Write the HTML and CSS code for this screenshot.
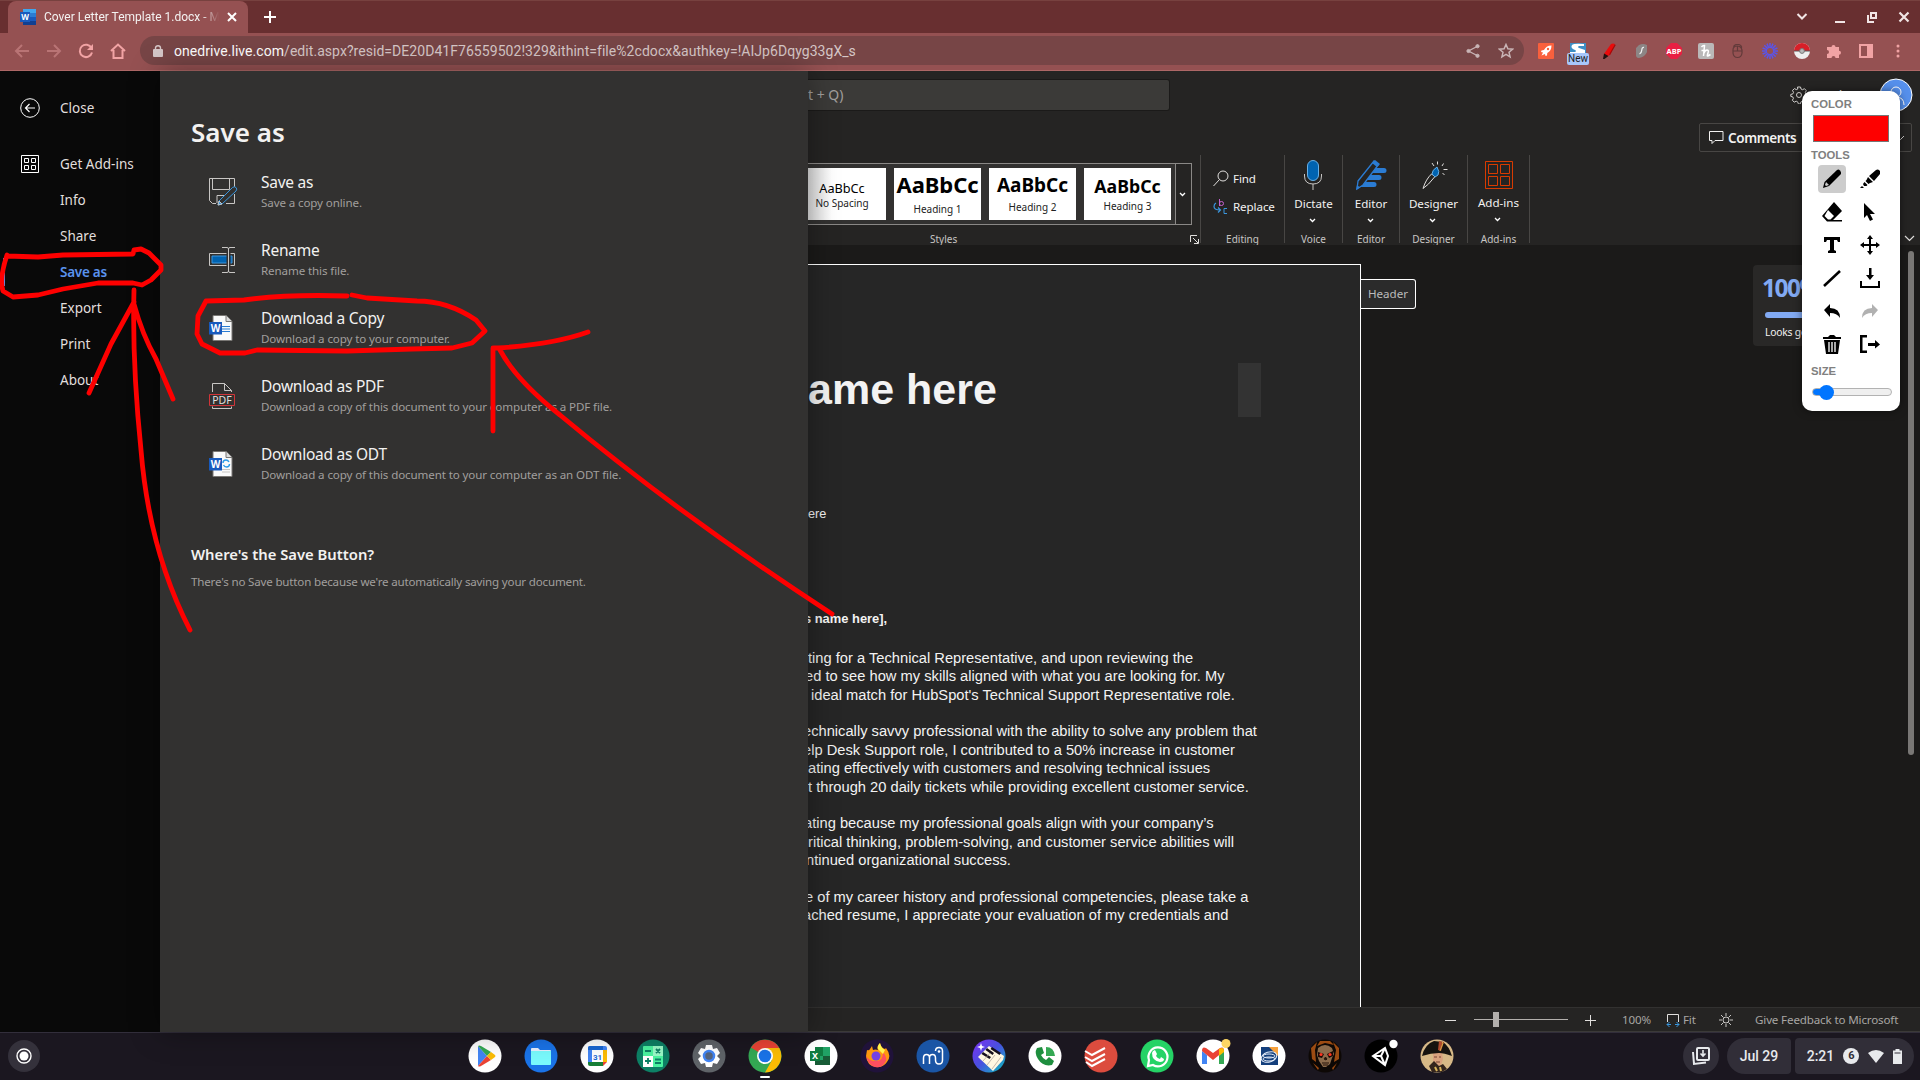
FILE: index.html
```html
<!DOCTYPE html>
<html lang="en">
<head>
    <meta charset="UTF-8">
    <title>Cover Letter Template 1.docx - Microsoft Word Online</title>
    <link rel="stylesheet" href="styles.css">
</head>
<body>
    <!-- Browser tabs -->
    <header class="tabstrip">
        <div class="tab">
            <svg width="16" height="16" viewBox="0 0 16 16"><path fill="#41a5ee" d="M3 0h13v4H3z"/><path fill="#2b7cd3" d="M3 4h13v4H3z"/><path fill="#185abd" d="M3 8h13v4H3z"/><path fill="#103f91" d="M3 12h13v4H3z"/><path fill="#185abd" d="M0 3h10v10H0z"/><text x="5" y="11" class="w-letter" font-size="8">W</text></svg>
            <span class="tab-title">Cover Letter Template 1.docx - Mi</span>
            <svg width="10" height="10" viewBox="0 0 10 10"><path d="M1 1l8 8M9 1l-8 8" stroke="#fff" stroke-width="2"/></svg>
        </div>
        <svg class="new-tab" width="12" height="12" viewBox="0 0 12 12"><path d="M6 0v12M0 6h12" stroke="#fff" stroke-width="2"/></svg>
        <div class="window-buttons">
            <svg width="12" height="12" viewBox="0 0 12 12"><path d="M1.500 3L6 7.500 10.500 3" fill="none" stroke="#f1e5e5" stroke-width="2"/></svg>
            <svg class="minimize" width="12" height="12" viewBox="0 0 12 12"><path d="M1 11h10" stroke="#f1e5e5" stroke-width="2"/></svg>
            <svg width="12" height="12" viewBox="0 0 12 12"><path d="M5 2h5v5H5zM2 4v7h6" fill="none" stroke="#f1e5e5" stroke-width="2"/></svg>
            <svg width="12" height="12" viewBox="0 0 12 12"><path d="M1.500 1.500l9 9M10.500 1.500l-9 9" stroke="#f1e5e5" stroke-width="2.200"/></svg>
        </div>
    </header>

    <!-- Address bar -->
    <div class="toolbar">
        <div class="nav-buttons">
            <svg width="16" height="16" viewBox="0 0 16 16" fill="none" stroke="#b97475" stroke-width="2"><path d="M15 8H2M8 2L2 8l6 6"/></svg>
            <svg width="16" height="16" viewBox="0 0 16 16" fill="none" stroke="#b97475" stroke-width="2"><path d="M1 8h13M8 2l6 6-6 6"/></svg>
            <svg width="16" height="16" viewBox="0 0 16 16" fill="none" stroke="#f1a3a4" stroke-width="2"><path d="M13.500 5A6.200 6.200 0 1 0 14 9.500"/><path d="M15 1v6H9z" fill="#f1a3a4" stroke="none"/></svg>
            <svg width="16" height="16" viewBox="0 0 16 16" fill="none" stroke="#f1a3a4" stroke-width="2"><path d="M1 8l7-6.500L15 8M3.500 7v8h9V7"/></svg>
        </div>
        <div class="omnibox">
            <svg width="10" height="12" viewBox="0 0 10 12"><path d="M1 4h8q1 0 1 1v6q0 1-1 1H1q-1 0-1-1V5q0-1 1-1z" fill="#d5c7c8"/><path d="M2.500 5V3a2.500 2.300 0 0 1 5 0v2" fill="none" stroke="#d5c7c8" stroke-width="1.400"/></svg>
            <span class="url"><b>onedrive.live.com</b>/edit.aspx?resid=DE20D41F76559502!329&amp;ithint=file%2cdocx&amp;authkey=!AIJp6Dqyg33gX_s</span>
            <svg width="14" height="14" viewBox="0 0 14 14" fill="#c9b5b6" stroke="#c9b5b6"><path d="M12 2L2.500 7l9.500 5" fill="none" stroke-width="1.300"/><circle cx="11.500" cy="2.200" r="1.600"/><circle cx="2.500" cy="7" r="1.600"/><circle cx="11.500" cy="11.800" r="1.600"/></svg>
            <svg width="16" height="16" viewBox="0 0 16 16"><path d="M8 1.500l1.900 4.300 4.700.4-3.600 3.100 1.100 4.600L8 11.400l-4.100 2.500L5 9.300 1.400 6.200l4.700-.4z" fill="none" stroke="#c9b5b6" stroke-width="1.500"/></svg>
        </div>
        <div class="extensions">
            <svg width="16" height="16" viewBox="0 0 16 16"><rect width="16" height="16" rx="1" fill="#f9603d"/><path d="M13.500 2.500c-4 0-6 2-7.500 4.500L3.500 7.500 3 9l2 .5L3.500 12.500l3.500-1.500.5 2L9 12.500l.3-2.500c2.500-1.500 4.200-3.500 4.200-7.500z" fill="#fff"/><circle cx="10" cy="6" r="1.200" fill="#f9603d"/></svg>
            <div class="ext-new">
                <svg width="16" height="10" viewBox="0 0 16 10"><path d="M0 0h16v10H0z" fill="#3d8fc5"/><path d="M2 2q2-2 12-1v2H9Q7 4 9 5l6 2v3H0V9h5Q7 8 5 7 0 5 2 2z" fill="#fff"/></svg>
                <span>New</span>
            </div>
            <svg width="16" height="16" viewBox="0 0 16 16"><path d="M9 1q2-1 4 0L8 12l-4 2-2-3z" fill="#e90c0c"/><path d="M13 1l.5 1.500L8 12l-1-.5z" fill="#a50808"/><path d="M2 10.500L6.500 13 2.500 16H1z" fill="#22110f"/></svg>
            <svg width="16" height="16" viewBox="0 0 16 16"><path d="M5 2q4-2 8 0v7q-2 5-8 6-3.500 0-3-4V5z" fill="#8c8585"/><path d="M10 4.500Q8 4 7.800 7T5.500 11" fill="none" stroke="#eee" stroke-width="1.300"/></svg>
            <svg width="16" height="16" viewBox="0 0 16 16"><path d="M5 0h6l5 5v6l-5 5H5l-5-5V5z" fill="#e81f43"/><text x="8" y="10.800" class="w-letter" font-size="7.500">ABP</text></svg>
            <svg width="16" height="16" viewBox="0 0 16 16"><rect width="16" height="16" rx="2" fill="#bab8b8"/><path d="M3.500 4Q5 2 6.500 2.500L5.500 13M5.500 11Q7 7 9 7t1 3-.5 3 3-1.500M3.500 7.500h4" fill="none" stroke="#fff" stroke-width="1.500"/></svg>
            <svg width="16" height="16" viewBox="0 0 16 16"><path d="M3 7q0-4 4-4t5 4v3q-.5 4.500-4.500 4.500T3 10zM3 8h9M7.500 3v5M4 5Q3 2.500 6 1.500h3q3 1 2.500 3.500" fill="none" stroke="#623a3a" stroke-width="1.200"/></svg>
            <svg width="16" height="16" viewBox="0 0 16 16"><g stroke="#5b54e6" stroke-width="1.500"><path d="M8 0v5M8 11v5M0 8h5M11 8h5M2.300 2.300l3.500 3.500M10.200 10.200l3.500 3.500M13.700 2.300l-3.500 3.500M5.800 10.200l-3.500 3.500M5 .6l1.900 4.600M9.100 10.800l1.900 4.600M11 .6L9.100 5.200M6.900 10.800L5 15.400M.6 5l4.600 1.900M10.800 9.100l4.600 1.900M15.400 5l-4.600 1.900M5.200 9.100L.6 11"/></g></svg>
            <svg width="16" height="16" viewBox="0 0 16 16"><circle cx="8" cy="8" r="8" fill="#eee"/><path d="M0 8a8 8 0 0 1 16 0z" fill="#d81f28"/><path d="M0 8h16" stroke="#555" stroke-width="1"/><circle cx="8" cy="8" r="2.400" fill="#b8b8b8" stroke="#777"/></svg>
            <svg width="16" height="16" viewBox="0 0 16 16"><path d="M2 4h3.500a2 2 0 1 1 4 0H13v3.700a2 2 0 1 1 0 4V15H9.500a2 2 0 1 0-4 0H1v-4a2 2 0 1 0 0-4V4z" fill="#f1a3a4"/></svg>
            <svg width="16" height="16" viewBox="0 0 16 16"><path d="M2 2h12v12H2z" fill="none" stroke="#f1a3a4" stroke-width="2"/><path d="M9 3h4v10H9z" fill="#f1a3a4"/></svg>
            <svg width="16" height="16" viewBox="0 0 16 16" fill="#f1a3a4"><circle cx="8" cy="3" r="1.500"/><circle cx="8" cy="8" r="1.500"/><circle cx="8" cy="13" r="1.500"/></svg>
        </div>
    </div>

    <main class="app">
        <!-- File menu -->
        <nav class="file-nav">
            <a class="nav-close"><svg width="20" height="20" viewBox="0 0 20 20" fill="none" stroke="#fff"><circle cx="10" cy="10" r="9.300"/><path d="M15 10H5.500M9.500 6l-4 4 4 4" stroke-width="1.200"/></svg>Close</a>
            <a><svg width="20" height="20" viewBox="0 0 20 20" fill="none" stroke="#fff"><path d="M1.500 1.500h17v17h-17zM4.500 4.500h4v4h-4zM11.500 4.500h4v4h-4zM4.500 11.500h4v4h-4zM11.500 11.500h4v4h-4z"/></svg>Get Add-ins</a>
            <a>Info</a>
            <a>Share</a>
            <a class="active">Save as</a>
            <a>Export</a>
            <a>Print</a>
            <a>About</a>
        </nav>

        <section class="save-panel">
            <h1>Save as</h1>
            <div class="option">
                <svg width="30" height="30" viewBox="0 0 30 30" fill="none" stroke="#c8c6c4"><path d="M26.500 10V1.500h-25v22l3 3H8M4.500 2v10.500h17V2M9 26v-7.500h7M26.500 17v9.500H18"/><path d="M24.500 10.500q2-1.500 3.500 0t0 3.500L14 27l-4 1 1-4z" stroke="#3a96dd" fill="#323130"/><path d="M11 24l3 3-4 1z" fill="#3a96dd"/></svg>
                <div><h2>Save as</h2><p>Save a copy online.</p></div>
            </div>
            <div class="option">
                <svg width="30" height="30" viewBox="0 0 30 30" fill="none"><path d="M1.500 8.500h25v12h-25z" stroke="#c8c6c4"/><path d="M4 11h20v7H4z" fill="#0063b1" stroke="#3a96dd"/><path d="M20.500 2v25" stroke="#323130" stroke-width="4"/><path d="M14 2.500h5q1.500 0 1.500 1.500 0-1.500 1.500-1.500h5M14 27.500h5q1.500 0 1.500-1.500 0 1.500 1.500 1.500h5M20.500 4v22" stroke="#c8c6c4"/></svg>
                <div><h2>Rename</h2><p>Rename this file.</p></div>
            </div>
            <div class="option">
                <svg width="30" height="30" viewBox="0 0 30 30"><path d="M5 2.500h13l6 6V27.500H5z" fill="#fafafa" stroke="#797774"/><path d="M18 2.500v6h6" fill="#ddd" stroke="#797774"/><path d="M14 13.500h8M14 16h8M14 18.500h8" stroke="#2b7cd3"/><path d="M1 9h13v12.500H1z" fill="#185abd"/><text x="7.500" y="19" class="w-letter" font-size="10">W</text></svg>
                <div><h2>Download a Copy</h2><p>Download a copy to your computer.</p></div>
            </div>
            <div class="option">
                <svg width="30" height="30" viewBox="0 0 30 30" fill="none" stroke="#c8c6c4"><path d="M4.500 11V2.500h12l7 7v1.500M16.500 2.500v7h7M4.500 25.500v2h19v-2"/><path d="M1.500 13.500h25v11h-25z" stroke="#d13438"/><text x="14" y="22.500" class="pdf-letter">PDF</text></svg>
                <div><h2>Download as PDF</h2><p>Download a copy of this document to your computer as a PDF file.</p></div>
            </div>
            <div class="option">
                <svg width="30" height="30" viewBox="0 0 30 30"><path d="M5 2.500h13l6 6V27.500H5z" fill="#fafafa" stroke="#797774"/><path d="M18 2.500v6h6" fill="#ddd" stroke="#797774"/><path d="M15 14q0-3 3-3 2 0 3 2M21.500 15q0 3-3 3-2 0-3-2" fill="none" stroke="#2b9be8" stroke-width="1.400"/><path d="M14 20.500h8M14 23h8" stroke="#c8c6c4"/><path d="M1 9h13v12.500H1z" fill="#185abd"/><text x="7.500" y="19" class="w-letter" font-size="10">W</text></svg>
                <div><h2>Download as ODT</h2><p>Download a copy of this document to your computer as an ODT file.</p></div>
            </div>
            <h3>Where's the Save Button?</h3>
            <p class="note">There's no Save button because we're automatically saving your document.</p>
        </section>

        <!-- Word editor -->
        <section class="editor">
            <div class="title-bar">
                <div class="search">t + Q)</div>
                <svg class="gear" width="18" height="18" viewBox="0 0 18 18" fill="none" stroke="#d2d0ce"><circle cx="9" cy="9" r="2.500"/><path d="M7.500 1h3l.5 2 1.500.7 2-1 1.800 2-1 1.800.6 1.500 2 .5v2l-2 .5-.7 1.500 1 2-2 1.800-1.800-1-1.500.6-.5 2h-2l-.7-2-1.500-.7-2 1-1.800-2 1-1.800-.6-1.500-2-.5v-2l2-.5.7-1.500-1-2 2-1.800 1.800 1 1.500-.6z"/></svg>
                <span class="account">Share</span>
                <svg class="avatar" width="34" height="34" viewBox="0 0 34 34" fill="none"><circle cx="17" cy="17" r="16" fill="#5690ec" stroke="#fff"/><circle cx="17" cy="14" r="5" stroke="#fff"/><path d="M9 27q0-8 8-8t8 8" stroke="#fff"/></svg>
            </div>
            <div class="action-row">
                <div class="comments"><svg width="15" height="15" viewBox="0 0 15 15" fill="none" stroke="#f3f2f1"><path d="M.5 1.500h13.500v9H6l-3 3v-3H.5z"/></svg>Comments<svg class="comments-chevron" width="9" height="6" viewBox="0 0 9 6"><path d="M1 1l3.500 3.500L8 1" fill="none" stroke="#d2d0ce"/></svg></div>
            </div>
            <div class="ribbon">
                <div class="group styles-group">
                    <div class="gallery">
                        <div class="style-card no-spacing"><b>AaBbCc</b><span>No Spacing</span></div>
                        <div class="style-card heading1"><b>AaBbCc</b><span>Heading 1</span></div>
                        <div class="style-card heading2"><b>AaBbCc</b><span>Heading 2</span></div>
                        <div class="style-card heading3"><b>AaBbCc</b><span>Heading 3</span></div>
                        <div class="gallery-more"><svg width="7" height="5" viewBox="0 0 7 5"><path d="M1 1l2.500 2.500L6 1" fill="none" stroke="#fff" stroke-width="1.300"/></svg></div>
                    </div>
                    <div class="group-label">Styles</div>
                    <svg class="launcher" width="9" height="9" viewBox="0 0 9 9" fill="none" stroke="#e1dfdd"><path d="M.5 7V.5H7M3 3l5 5M8.500 4v4.500H4"/></svg>
                </div>
                <div class="group editing">
                    <div class="command"><svg width="16" height="17" viewBox="0 0 16 17" fill="none" stroke="#e1dfdd"><circle cx="10" cy="6" r="5"/><path d="M6.500 9.500L.5 16"/></svg>Find</div>
                    <div class="command"><svg width="16" height="17" viewBox="0 0 16 17" fill="none"><path d="M6.500 1v7M6.500 5q0-1.500 2-1.500t2 2-2 2-2-1.500" stroke="#c561cf"/><path d="M3 5Q1 6 1 8.500 1 12 7 12M5 9.500L7.500 12 5 14.500" stroke="#3a96dd" stroke-width="1.200"/><path d="M14 10.500h-3v5h3" stroke="#3a96dd"/></svg>Replace</div>
                    <div class="group-label">Editing</div>
                </div>
                <div class="group dictate">
                    <svg width="32" height="32" viewBox="0 0 32 32" fill="none"><rect x="9.500" y="1.500" width="11" height="20" rx="5.500" fill="#0063b1" stroke="#69afe5"/><path d="M6.500 15v2q0 8 8.500 8t8.500-8v-2M15 25v6" stroke="#c8c6c4"/></svg>
                    <span>Dictate</span>
                    <svg class="chevron" width="7" height="5" viewBox="0 0 7 5"><path d="M1 1l2.500 2.500L6 1" fill="none" stroke="#fff" stroke-width="1.300"/></svg>
                    <div class="group-label">Voice</div>
                </div>
                <div class="group editor-group">
                    <svg width="32" height="32" viewBox="0 0 32 32"><path d="M19 9h10q2.500 0 2.500 2.500T29 14H15zM14 16h10q2.500 0 2.500 2.500T24 21H11zM9 23h10q2.500 0 2.500 2.500T19 28H4z" fill="#2b7cd3"/><path d="M3 22L19 2l4.500 3.500L8 26l-6 4z" fill="#252423" stroke="#2b7cd3" stroke-width="1.300"/><path d="M17 4l3-3 5 4-3 3zM2 26l3 2.500L1 31z" fill="#2b7cd3"/></svg>
                    <span>Editor</span>
                    <svg class="chevron" width="7" height="5" viewBox="0 0 7 5"><path d="M1 1l2.500 2.500L6 1" fill="none" stroke="#fff" stroke-width="1.300"/></svg>
                    <div class="group-label">Editor</div>
                </div>
                <div class="group designer">
                    <svg width="32" height="32" viewBox="0 0 32 32" fill="none" stroke="#e1dfdd"><path d="M13.500 15Q8 20 5 29.500q5-3 12-12zM19.500 2.500v3M14 4l2 3M25.500 4.500L24 7M25.500 10.500h4M24.500 14l2 2"/><path d="M14 15q0-4 5-7 3 5 1 8l-3 2z" fill="#0063b1" stroke="#69afe5"/></svg>
                    <span>Designer</span>
                    <svg class="chevron" width="7" height="5" viewBox="0 0 7 5"><path d="M1 1l2.500 2.500L6 1" fill="none" stroke="#fff" stroke-width="1.300"/></svg>
                    <div class="group-label">Designer</div>
                </div>
                <div class="group addins">
                    <svg width="32" height="31" viewBox="0 0 32 31" fill="none" stroke="#d83b01"><path d="M2.500 2.500h27v27h-27zM5.500 5.500h9v9h-9zM17.500 5.500h9v9h-9zM5.500 17.500h9v9h-9zM17.500 17.500h9v9h-9z"/></svg>
                    <span>Add-ins</span>
                    <svg class="chevron" width="7" height="5" viewBox="0 0 7 5"><path d="M1 1l2.500 2.500L6 1" fill="none" stroke="#fff" stroke-width="1.300"/></svg>
                    <div class="group-label">Add-ins</div>
                </div>
                <svg class="collapse" width="11" height="7" viewBox="0 0 11 7"><path d="M1 1l4.500 4.500L10 1" fill="none" stroke="#e1dfdd" stroke-width="1.200"/></svg>
            </div>

            <div class="canvas">
                <article class="page">
                    <div class="name-row"><h2>ame here</h2><div class="block"></div></div>
                    <p class="contact">ere</p>
                    <p class="dear">s name here],</p>
                    <p>ting for a Technical Representative, and upon reviewing the<br>
                    <span class="cut3">ed to see how my skills aligned with what you are looking for. My</span><br>
                    <span class="in3">ideal match for HubSpot's Technical Support Representative role.</span></p>
                    <p><span class="cut5">echnically savvy professional with the ability to solve any problem that</span><br>
                    <span class="cut5">elp Desk Support role, I contributed to a 50% increase in customer</span><br>
                    ating effectively with customers and resolving technical issues<br>
                    t through 20 daily tickets while providing excellent customer service.</p>
                    <p><span class="cut4">ating because my professional goals align with your company’s</span><br>
                    ritical thinking, problem-solving, and customer service abilities will<br>
                    <span class="cut2">ntinued organizational success.</span></p>
                    <p><span class="cut3">e of my career history and professional competencies, please take a</span><br>
                    <span class="cut5">ached resume, I appreciate your evaluation of my credentials and</span></p>
                </article>
                <div class="header-tag">Header</div>
                <div class="score">
                    <strong>100%</strong>
                    <div class="score-bar"></div>
                    <span>Looks good</span>
                </div>
                <div class="scrollbar"></div>
            </div>

            <footer class="status">
                <svg width="12" height="12" viewBox="0 0 12 12"><path d="M0 6.500h11" stroke="#e1dfdd"/></svg>
                <div class="zoom-slider"><i></i></div>
                <svg width="12" height="12" viewBox="0 0 12 12"><path d="M0 6.500h11M5.500 1v11" stroke="#e1dfdd"/></svg>
                <span class="percent">100%</span>
                <svg width="14" height="14" viewBox="0 0 14 14" fill="none"><path d="M1.500 9V1.500h11V9" stroke="#e1dfdd"/><path d="M1 11.500h4M9 11.500h4M3.500 9L1 11.500 3.500 14M10.500 9l2.500 2.500-2.500 2.500" stroke="#3a96dd"/></svg>
                <span class="fit">Fit</span>
                <svg width="14" height="14" viewBox="0 0 14 14" fill="none" stroke="#c8c6c4"><circle cx="7" cy="7" r="3"/><path d="M7 0v3M7 11v3M0 7h3M11 7h3M2 2l2.500 2.500M9.500 9.500L12 12M12 2L9.500 4.500M4.500 9.500L2 12"/></svg>
                <span class="feedback">Give Feedback to Microsoft</span>
            </footer>
        </section>
    </main>

    <!-- Shelf -->
    <footer class="shelf">
        <svg class="home-button" width="34" height="34" viewBox="0 0 34 34"><circle cx="17" cy="17" r="16" fill="#34313b"/><circle cx="17" cy="17" r="7" fill="none" stroke="#fff" stroke-width="1.400"/><circle cx="17" cy="17" r="4.500" fill="#fff"/></svg>
        <div class="apps">
            <svg viewBox="0 0 34 34"><circle cx="17" cy="17" r="16.500" fill="#fff"/><path d="M10 7v20l9-10z" fill="#4285f4"/><path d="M10 7q1-1 3 0l10 6-4 4z" fill="#34a853"/><path d="M10 27q1 1 3 0l10-6-4-4z" fill="#ea4335"/><path d="M23 13l4 3q1 1 0 2l-4 3-4-4z" fill="#fbbc04"/></svg>
            <svg viewBox="0 0 34 34"><circle cx="17" cy="17" r="16.500" fill="#1a73e8"/><path d="M7 10q0-1 1-1h6l2 2h10q1 0 1 1H7z" fill="#e8f0fe"/><path d="M7 12h20v13q0 1-1 1H8q-1 0-1-1z" fill="#7afafd"/></svg>
            <svg viewBox="0 0 34 34"><circle cx="17" cy="17" r="16.500" fill="#fff"/><path d="M8 9q0-2 2-2h15q2 0 2 2v14H8z" fill="#4285f4"/><path d="M8 9q0-2 2-2h13v4H8z" fill="#1967d2"/><path d="M23 11h4v12h-4z" fill="#fbbc04"/><path d="M8 23h15v4H10q-2 0-2-2z" fill="#188038"/><path d="M23 23h4l-4 4z" fill="#ea4335"/><path d="M12 11h11v12H12z" fill="#fff"/><text x="17.500" y="20.500" class="calendar-number">31</text></svg>
            <svg viewBox="0 0 34 34"><circle cx="17" cy="17" r="16.500" fill="#0d8065"/><rect x="7" y="7" width="20" height="21" rx="1" fill="#4bf3a0"/><path d="M17 7h10v10H17z" fill="#9af8c7"/><path d="M7 17h10v11H7z" fill="#fff"/><path d="M9 12h6M20 10l4 4M24 10l-4 4M9 22h6M12 19v6M19 20.500h6M19 24h6" stroke="#0d8065" stroke-width="1.800"/></svg>
            <svg viewBox="0 0 34 34"><circle cx="17" cy="17" r="16.500" fill="#5f6368"/><path d="M14 6h6l1 4 4-1 3 5-3 3 3 3-3 5-4-1-1 4h-6l-1-4-4 1-3-5 3-3-3-3 3-5 4 1z" fill="#fff"/><circle cx="17" cy="17" r="5" fill="#56657e" stroke="#4285f4" stroke-width="2.500"/></svg>
            <svg viewBox="0 0 34 34"><circle cx="17" cy="17" r="16.500" fill="#34a853"/><path d="M17 17L3 8.500A16.500 16.500 0 0 1 31.200 8.700z" fill="#ea4335"/><path d="M17 9h14.300A16.500 16.500 0 0 1 17 33.500l7-12.500z" fill="#fbbc04"/><circle cx="17" cy="17" r="8" fill="#fff"/><circle cx="17" cy="17" r="6.300" fill="#1a73e8"/><rect x="12" y="37" width="10" height="2" rx="1" fill="#fff"/></svg>
            <svg viewBox="0 0 34 34"><circle cx="17" cy="17" r="16.500" fill="#fff"/><path d="M11 8h15v18H11z" fill="#21a366"/><path d="M11 8h8v9h-8z" fill="#107c41"/><path d="M19 17h7v9h-15v-5h8z" fill="#185c37"/><path d="M6 12h10v10H6z" fill="#107c41"/><text x="11" y="20" class="w-letter" font-size="9">X</text></svg>
            <svg viewBox="0 0 34 34"><circle cx="17" cy="17" r="16.500" fill="#20123a"/><path d="M7 11q2 1 3-1l2-3 1 4q2-1 5 0-2-3 2-7 1 5 5 6l1-1q6 8 1 14-4 6-11 5-9-1-10-11z" fill="#ff980e"/><path d="M6 17q3 5 9 5 8 1 8-9 6 7 1 12-3 4-9 3-7-2-9-11z" fill="#ff4f5e"/><path d="M20 4q1 5 5 7l-2 4-5-5q-1-3 2-6z" fill="#fff44f"/><circle cx="16" cy="17" r="4.500" fill="#7542e5"/></svg>
            <svg viewBox="0 0 34 34"><circle cx="17" cy="17" r="16.500" fill="#1a55a5"/><path d="M7.500 25v-6q0-3.500 3-3.500t3 3.500v6M13.500 19q0-3.500 3-3.500t3 3.500v2q0 4 3.500 4t3.500-4v-9q0-3.500-3.500-3.500T19.500 12" fill="none" stroke="#fff" stroke-width="1.500"/><circle cx="23" cy="12.500" r="1.300" fill="#fff"/></svg>
            <svg viewBox="0 0 34 34"><defs><linearGradient id="piano" x1="0" y1="0" x2="1" y2="1"><stop offset="0" stop-color="#7d30f1"/><stop offset=".5" stop-color="#4751df"/><stop offset="1" stop-color="#08c4bb"/></linearGradient></defs><circle cx="17" cy="17" r="16.500" fill="url(#piano)"/><path d="M6 18l11-11 15 10-1 4-10 11z" fill="#fff8e1"/><path d="M15 9l7 5-1.500 2-7-5zM11 13l8 5-1.500 2-8-5zM20 8l9 6-1.500 2-9-6z" fill="#16101c"/><path d="M11 22l7-8M15 26l8-10M20 30l9-12" stroke="#b8aaa0" stroke-width=".8"/><path d="M9 4l1 3 3 1-3 1-1 3-1-3-3-1 3-1z" fill="#fff"/></svg>
            <svg viewBox="0 0 34 34"><circle cx="17" cy="17" r="16.500" fill="#fff"/><path d="M9 9l5-1 2 6-3 2q2 4 5 5l3-3 5 4-2 4q-9 2-14-6-4-6-1-11z" fill="#1e8e3e"/><path d="M18 8q8 0 9 9h-9z" fill="#34a853"/></svg>
            <svg viewBox="0 0 34 34"><circle cx="17" cy="17" r="16.500" fill="#dc4c3e"/><path d="M1 12l7 4 13-7M1 18l7 4 13-7M2 23l6 4 13-7" stroke="#fff" stroke-width="2" fill="none"/></svg>
            <svg viewBox="0 0 34 34"><circle cx="17" cy="17" r="16.500" fill="#25d366"/><path d="M8 27l1-6a9.500 9.500 0 1 1 4 5z" fill="none" stroke="#fff" stroke-width="2.200"/><path d="M13 12l2-1 2 4-1 2q2 3 4 3l1-2 3 2q0 3-4 3-8-1-8-9z" fill="#fff"/></svg>
            <svg viewBox="0 0 34 34"><circle cx="17" cy="17" r="16.500" fill="#fff"/><path d="M6 12l5 4v9H6z" fill="#4285f4"/><path d="M23 16l5-4v13h-5z" fill="#34a853"/><path d="M6 12q0-5 4-3l7 5 7-5q4-2 4 3l-11 9z" fill="#ea4335"/><path d="M23 10q5-3 5 2v1l-5 4z" fill="#fbbc04"/><circle cx="30" cy="4.500" r="4.500" fill="#fdd663"/></svg>
            <svg viewBox="0 0 34 34"><circle cx="17" cy="17" r="16.500" fill="#fff"/><path d="M9 8h17v18H9z" fill="#143f7c"/><path d="M17 8h9v9z" fill="#f7a13c"/><g fill="none" stroke="#e4edf9"><ellipse cx="17" cy="18" rx="8" ry="5" transform="rotate(-18 17 18)"/><ellipse cx="17" cy="17" rx="6" ry="2"/><ellipse cx="17" cy="20" rx="6" ry="2"/></g></svg>
            <svg viewBox="0 0 34 34"><circle cx="17" cy="17" r="16.500" fill="#0d0805"/><path d="M3 9l6-6-2 8 1 12-4-3zM31 9l-6-6 3 8-2 12 5-3zM5 24l6 5-1 2zM29 24l-5 5 1 2zM12 2l10 0 4 4-9-2-8 3z" fill="#9c4b12"/><path d="M10 9q7-6 14 0l2 6-2 4-2 6-4 3h-3l-4-6-2-6z" fill="#8c6b4b"/><path d="M10 13l6 2-2 4-4-1zM25 12l-6 3 2 4 4-2z" fill="#1a0904"/><circle cx="13" cy="15.500" r="1.600" fill="#ff3521"/><circle cx="22" cy="15.500" r="1.600" fill="#ff3521"/><path d="M16 20l1.500-2 1.500 2-1 1zM14 24h7M15 26h5" fill="#22120b" stroke="#26140b"/></svg>
            <svg viewBox="0 0 34 34"><circle cx="17" cy="17" r="16.500" fill="#000"/><path d="M9 17l12-8 3 8-3 9zM9 17h8l4-8M17 17l4 9" fill="none" stroke="#fff" stroke-width="2"/><circle cx="29.500" cy="5" r="4.200" fill="#fff"/></svg>
            <svg viewBox="0 0 34 34"><circle cx="17" cy="17" r="16.500" fill="#d7b987"/><path d="M13 14h9l1 6-2 6-4 1-4-5z" fill="#d9a27e"/><path d="M9 27l5-5 5 5 4-2 4 5-5 3H12z" fill="#34251d"/><path d="M2 17Q5 5 14 2l9 1q6 4 9 14-8-3-13-3-8 0-17 3z" fill="#16130f"/><path d="M19 2l5 1-3 9-3-1z" fill="#ae4b2e"/><path d="M22 3l1 1-3 8" fill="none" stroke="#d2aa45"/><path d="M14 18h3M19 18h2M16 23h4" stroke="#764532"/><path d="M15 28l2 4M20 28l1 4" stroke="#d7b45b" stroke-width="2"/></svg>
        </div>
        <div class="tray">
            <div class="tray-circle"><svg width="20" height="20" viewBox="0 0 20 20" fill="none" stroke="#e8eaed" stroke-width="2"><rect x="6" y="2" width="12" height="12" rx="1"/><path d="M2 6l1 12 12-1.500"/><path d="M12 4v5M9.500 7.500L12 10l2.500-2.500" stroke-width="1.600"/></svg></div>
            <div class="tray-date">Jul 29</div>
            <div class="tray-status">
                <span>2:21</span>
                <b>6</b>
                <svg width="16" height="13" viewBox="0 0 16 13"><path d="M0 3q8-6 16 0L8 13z" fill="#e8eaed"/></svg>
                <svg width="9" height="15" viewBox="0 0 9 15"><path d="M2.500 0h4v1.500H9V15H0V1.500h2.500z" fill="#e8eaed"/><path d="M1.500 4h6" stroke="#34313b"/></svg>
            </div>
        </div>
    </footer>

    <!-- Freehand marks drawn over the page -->
    <svg class="ink" width="1920" height="1080" viewBox="0 0 1920 1080">
        <path d="M7 256l31 1 25-2 70-1 1-4 7-1 8 4 12 12v5l-10 10-9 5-9-2H98l-35 6-25 6-25 2-10-6q-4-12 4-36"/>
        <path d="M134 290q-2 72 7 160 8 100 49 180M134 302l-23 42-22 49M134 304q8 30 22 55l17 40"/>
        <path d="M347 296q-60-2-103 4l-38 1-8 15-1 18 5 10 18 9h25l12-3 90 1 65-2 40-1 20-5 13-12L476 320Q448 301 417 301L367 298 352 295"/>
        <path d="M588 332q-33 12-90 16h-4M493 348v83M500 350q16 30 60 65 120 100 272 199"/>
    </svg>

    <!-- Drawing tools -->
    <aside class="toolbox">
        <label>COLOR</label>
        <div class="swatch"></div>
        <label class="tools-label">TOOLS</label>
        <div class="tools">
            <button class="selected"><svg viewBox="0 0 20 20"><path d="M1 19l1.500-6L15 1q1.500-1 3 .5t1 3.500L7 17z"/><path d="M3 16l1-3 3 3-3 1z" fill="#ccc"/></svg></button>
            <button><svg viewBox="0 0 20 20"><path d="M9 7l7-6q2-1 3.500.5T20 5l-6 7zM8 8l5 5-3 1-1.500 1-3-3L6.500 11zM4.500 13l3 3-1 1H4L3 15zM2 17l2 2H0z"/></svg></button>
            <button><svg viewBox="0 0 20 20"><path d="M12 0l8 9-9 9h9v1.500H5L0 14z"/><path d="M6 8l6 6-3.500 3.500H6L2.500 14z" fill="#fff"/></svg></button>
            <button><svg viewBox="0 0 20 20"><path d="M4 1v15l3-3 3 6 3-1.500-3-5.500h5z"/></svg></button>
            <button><svg viewBox="0 0 20 20"><path d="M2 2h16v5h-2l-1-2h-3v10l2 1v2H6v-2l2-1V5H5L4 7H2z"/></svg></button>
            <button><svg viewBox="0 0 20 20"><path d="M10 0l3 4h-2v5h5V7l4 3-4 3v-2h-5v5h2l-3 4-3-4h2v-5H4v2l-4-3 4-3v2h5V4H7z"/></svg></button>
            <button><svg viewBox="0 0 20 20"><path d="M2 18L18 3" stroke="#000" stroke-width="2.500"/></svg></button>
            <button><svg viewBox="0 0 20 20"><path d="M9 0h2.500v7H14l-4 5-4-5h3zM0 13h2v5h16v-5h2v7H0z"/></svg></button>
            <button><svg viewBox="0 0 20 20"><path d="M2 9l6-6v4q10 0 10 10-3-5-10-5v4z"/></svg></button>
            <button class="disabled"><svg viewBox="0 0 20 20"><path d="M18 9l-6-6v4Q2 7 2 17q3-5 10-5v4z"/></svg></button>
            <button><svg viewBox="0 0 20 20"><path d="M1 3h5l2-2h4l2 2h5v2H1zM2 6h16l-2 14H4z"/><path d="M7 8v10M10 8v10M13 8v10" stroke="#fff" stroke-width="1.300"/></svg></button>
            <button><svg viewBox="0 0 20 20"><path d="M0 1h7v2.500H2.500v13H7V19H0zM8 9h7V6l5 4.500-5 4V12H8z"/></svg></button>
        </div>
        <label>SIZE</label>
        <div class="size-slider"><i></i></div>
    </aside>
</body>
</html>
```

FILE: styles.css
```css
* {
    box-sizing: border-box;
}
body {
    margin: 0;
    width: 1920px;
    height: 1080px;
    overflow: hidden;
    position: relative;
    display: flex;
    flex-direction: column;
    font-family: 'Noto Sans', sans-serif;
    background: #1b1720;
    color: #f3f2f1;
}
svg {
    display: block;
    flex: none;
}
h1, h2, h3, p {
    margin: 0;
}
.w-letter {
    fill: #fff;
    font-family: 'Noto Sans', sans-serif;
    font-weight: bold;
    text-anchor: middle;
}
.pdf-letter {
    fill: #e1dfdd;
    stroke: none;
    font-size: 10.500px;
    text-anchor: middle;
}
.calendar-number {
    fill: #1967d2;
    font: bold 8px Roboto, sans-serif;
    text-anchor: middle;
}

/* browser */
.tabstrip {
    height: 33px;
    background: #682f30;
    border-top: 1px solid #77413f;
    display: flex;
    align-items: center;
    padding-left: 8px;
    font-family: Roboto, sans-serif;
}
.tab {
    width: 240px;
    height: 32px;
    border-radius: 8px 8px 0 0;
    background: #955152;
    display: flex;
    align-items: center;
    padding: 0 11px 1px 12px;
}
.tab-title {
    flex: 1;
    margin: 0 8px;
    font-size: 12px;
    white-space: nowrap;
    overflow: hidden;
    mask-image: linear-gradient(to right, #000 90%, transparent);
}
.new-tab {
    margin: 0 0 1px 16px;
}
.window-buttons {
    margin-left: auto;
    margin-right: 10px;
    display: flex;
    gap: 20px;
}
.minimize {
    margin-left: 6px;
}
.toolbar {
    height: 38px;
    background: #955152;
    border-bottom: 1px solid #ad6766;
    display: flex;
    align-items: center;
    padding-bottom: 2px;
    font-family: Roboto, sans-serif;
}
.nav-buttons {
    width: 140px;
    display: flex;
    gap: 16px;
    padding-left: 14px;
}
.omnibox {
    width: 1384px;
    height: 29px;
    border-radius: 15px;
    background: #774546;
    display: flex;
    align-items: center;
    padding: 0 10px 0 13px;
    gap: 18px;
}
.url {
    flex: 1;
    margin-left: -7px;
    font-size: 14px;
    letter-spacing: 0.050px;
    color: #d6c7c7;
    white-space: nowrap;
}
.url b {
    font-weight: normal;
    color: #fff;
}
.extensions {
    display: flex;
    gap: 16px;
    padding-left: 14px;
}
.ext-new {
    width: 16px;
    height: 16px;
    position: relative;
}
.ext-new span {
    position: absolute;
    top: 10px;
    left: -3px;
    width: 22px;
    height: 12px;
    border-radius: 2px;
    background: #a8c7fa;
    color: #202124;
    font-size: 10px;
    line-height: 12px;
    text-align: center;
}

/* file menu */
.app {
    height: 961px;
    display: flex;
}
.file-nav {
    width: 160px;
    background: #090909;
    padding-top: 19px;
}
.file-nav a {
    display: flex;
    align-items: center;
    height: 36px;
    padding-left: 60px;
    font-size: 13.500px;
    color: #e1dfdd;
}
.file-nav a svg {
    margin: 0 20px 0 -40px;
}
.file-nav .nav-close {
    margin-bottom: 20px;
}
.file-nav .active {
    color: #5a92ee;
    font-weight: 600;
    border-left: 2px solid #5a92ee;
    margin-left: 3px;
    padding-left: 55px;
    height: 28px;
    margin-top: 4px;
    margin-bottom: 4px;
    letter-spacing: -0.250px;
}
.save-panel {
    width: 648px;
    background: #323130;
    padding: 41px 0 0 31px;
    position: relative;
    box-shadow: 0 0 28px rgba(0, 0, 0, 0.35);
    z-index: 1;
}
.save-panel h1 {
    font-size: 26px;
    font-weight: 600;
    line-height: 40px;
    margin-bottom: 16px;
}
.option {
    height: 68px;
    display: flex;
    padding: 9px 0 0 17px;
    gap: 23px;
}
.option h2 {
    font-size: 15.500px;
    font-weight: normal;
    line-height: 22px;
    letter-spacing: -0.250px;
    margin: -6px 0 1px;
}
.option p, .note {
    font-size: 11.600px;
    line-height: 18px;
    letter-spacing: -0.120px;
    color: #a19f9d;
    white-space: nowrap;
}
.save-panel h3 {
    font-size: 14.800px;
    font-weight: 600;
    line-height: 20px;
    margin-top: 36px;
    margin-bottom: 9px;
}
.note {
    letter-spacing: -0.190px;
}

/* editor */
.editor {
    width: 1112px;
    background: #252423;
    overflow: hidden;
}
.title-bar {
    height: 48px;
    display: flex;
    align-items: center;
}
.search {
    width: 362px;
    height: 32px;
    border: 1px solid #1b1a19;
    border-left: 0;
    border-radius: 0 3px 3px 0;
    background: #3b3a38;
    color: #a19f9d;
    font-size: 14px;
    line-height: 29px;
}
.gear {
    margin-left: 620px;
}
.account {
    margin-left: 23px;
    width: 40px;
    font-size: 14px;
}
.avatar {
    margin-left: 8px;
}
.action-row {
    height: 36px;
    display: flex;
    justify-content: flex-end;
    padding: 4px 8px 0 0;
}
.comments {
    width: 213px;
    height: 29px;
    border: 1px solid #484644;
    border-radius: 2px;
    display: flex;
    align-items: center;
    gap: 4px;
    padding-left: 9px;
    font-size: 13.500px;
    letter-spacing: -0.400px;
    font-weight: 600;
}
.comments-chevron {
    margin: 0 6px 0 auto;
}
.ribbon {
    height: 90px;
    display: flex;
}
.group {
    height: 88px;
    border-right: 1px solid #484644;
    position: relative;
    display: flex;
    flex-direction: column;
    align-items: center;
    font-size: 11.600px;
    padding-top: 4px;
}
.group > svg + span {
    line-height: 18px;
    margin: 4px 0 5px;
}
.chevron {
    margin-right: 2px;
}
.group-label {
    margin-top: auto;
    margin-bottom: -2px;
    font-size: 10px;
    line-height: 12px;
    color: #c8c6c4;
}
.styles-group {
    width: 393px;
    padding-top: 8px;
    align-items: flex-start;
}
.styles-group .group-label {
    margin-left: 122px;
}
.gallery {
    width: 384px;
    height: 62px;
    border: 1px solid #8a8886;
    border-left: 0;
    background: #323130;
    display: flex;
    align-items: center;
    gap: 8px;
}
.style-card {
    width: 87px;
    height: 52px;
    background: #fff;
    color: #222;
    display: flex;
    flex-direction: column;
    align-items: center;
    justify-content: center;
    font-size: 10px;
    line-height: 14px;
}
.style-card b {
    color: #000;
    font-weight: bold;
}
.no-spacing {
    width: 78px;
    padding-right: 10px;
    padding-top: 2px;
    background: linear-gradient(to right, #dcdcdc, #fff 24px);
}
.no-spacing b {
    font-size: 12.700px;
    font-weight: normal;
    line-height: 16px;
}
.heading1 b {
    font-size: 22px;
    line-height: 25px;
    margin: 0 0 5px;
    letter-spacing: -0.100px;
}
.heading2 b {
    font-size: 19px;
    line-height: 22px;
    margin: -1px 0 4px;
}
.heading3 b {
    font-size: 17.700px;
    line-height: 22px;
    margin: -1px 0 2px;
}
.gallery-more {
    margin-left: -4px;
    align-self: stretch;
    flex: 1;
    border-left: 1px solid #8a8886;
    background: #252423;
    display: flex;
    align-items: center;
    justify-content: center;
}
.gallery-more svg {
    margin-right: 2px;
}
.launcher {
    position: absolute;
    right: 1px;
    bottom: -1px;
}
.editing {
    width: 84px;
    padding-top: 9px;
}
.command {
    align-self: stretch;
    height: 28px;
    display: flex;
    align-items: center;
    gap: 4px;
    padding-left: 12px;
    letter-spacing: -0.100px;
}
.dictate {
    width: 58px;
}
.editor-group {
    width: 57px;
}
.designer {
    width: 68px;
}
.addins {
    width: 62px;
}
.collapse {
    margin: 80px 5px 0 auto;
}

/* document */
.canvas {
    height: 762px;
    background: #1b1a19;
    display: flex;
    padding-top: 19px;
    position: relative;
    overflow: hidden;
}
.page {
    width: 553px;
    border-top: 1px solid #fff;
    border-right: 1px solid #fff;
    background: #262626;
    font-family: 'Liberation Sans', sans-serif;
    font-size: 14.700px;
    line-height: 18.400px;
    white-space: nowrap;
    color: #f3f3f3;
}
.name-row {
    display: flex;
    height: 152px;
    padding-top: 98px;
}
.name-row h2 {
    width: 430px;
    margin-top: -1px;
    font-size: 43px;
    line-height: 54px;
}
.block {
    width: 23px;
    height: 54px;
    background: #333;
}
.page .contact {
    font-size: 12.700px;
    margin: 88px 0 0;
}
.page .dear {
    font-size: 12.900px;
    font-weight: bold;
    margin: 87px 0 20px -4px;
}
.page p {
    margin-bottom: 18.400px;
}
.cut2 {
    margin-left: -2px;
}
.cut3 {
    margin-left: -3px;
}
.cut4 {
    margin-left: -4px;
}
.cut5 {
    margin-left: -5px;
}
.in3 {
    margin-left: 3px;
}
.header-tag {
    width: 55px;
    height: 30px;
    margin-top: 15px;
    border: 1px solid #fff;
    border-left: 0;
    border-radius: 0 3px 3px 0;
    background: #2b2b2b;
    color: #bbb;
    font-size: 11.600px;
    line-height: 28px;
    text-align: center;
}
.score {
    width: 146px;
    height: 81px;
    margin: 1px 0 0 337px;
    padding: 8px 9px;
    border-radius: 4px;
    background: #292827;
    font-size: 10.300px;
    line-height: 14px;
}
.score strong {
    display: block;
    font-size: 24.500px;
    line-height: 30px;
    letter-spacing: -1.500px;
    color: #82aaf3;
}
.score-bar {
    height: 6px;
    margin: 9px 0 7px 3px;
    border-radius: 3px;
    background: #82aaf3;
}
.score span {
    margin-left: 3px;
    letter-spacing: -0.200px;
}
.scrollbar {
    position: absolute;
    right: 6px;
    top: 6px;
    width: 6px;
    height: 504px;
    border-radius: 3px;
    background: #797775;
}
.status {
    height: 25px;
    border-top: 1px solid #323130;
    border-bottom: 1px solid #3b3a38;
    display: flex;
    align-items: center;
    padding-left: 637px;
    font-size: 11.600px;
    letter-spacing: -0.150px;
    color: #a8a6a4;
    white-space: nowrap;
}
.zoom-slider {
    width: 94px;
    height: 15px;
    margin: 0 17px;
    display: flex;
    align-items: center;
    background: linear-gradient(#b3b0ad, #b3b0ad) center / 100% 1px no-repeat;
}
.zoom-slider i {
    width: 6px;
    height: 15px;
    margin-left: 19px;
    background: #b3b0ad;
}
.percent {
    width: 29px;
    margin: 0 15px 0 25px;
}
.fit {
    width: 14px;
    margin: 0 22px 0 3px;
}
.feedback {
    margin-left: 22px;
}

/* shelf */
.shelf {
    height: 48px;
    border-top: 1px solid #322e3b;
    display: flex;
    align-items: center;
    padding-bottom: 1px;
    font-family: Roboto, sans-serif;
}
.home-button {
    margin-left: 7px;
}
.apps {
    margin-left: 427px;
    display: flex;
    gap: 22px;
}
.apps svg {
    width: 34px;
    height: 34px;
    overflow: visible;
}
.tray {
    margin-left: auto;
    margin-right: 6px;
    display: flex;
    gap: 4px;
    font-size: 14px;
    font-weight: 500;
    color: #e8eaed;
}
.tray-circle, .tray-date, .tray-status {
    height: 36px;
    background: #312e38;
    display: flex;
    align-items: center;
    justify-content: center;
}
.tray-circle {
    width: 36px;
    border-radius: 50%;
    margin-right: 4px;
}
.tray-date {
    width: 64px;
    border-radius: 18px 4px 4px 18px;
}
.tray-status {
    width: 119px;
    border-radius: 4px 18px 18px 4px;
    gap: 9px;
}
.tray-status b {
    width: 16px;
    height: 16px;
    border-radius: 50%;
    background: #e8eaed;
    color: #312e38;
    font-size: 11px;
    line-height: 16px;
    text-align: center;
}

/* overlays */
.ink {
    position: absolute;
    left: 0;
    top: 0;
    z-index: 2;
    fill: none;
    stroke: #fe0000;
    stroke-width: 4.800;
    stroke-linecap: round;
    stroke-linejoin: round;
}
.toolbox {
    position: absolute;
    left: 1802px;
    top: 91px;
    z-index: 3;
    width: 98px;
    height: 320px;
    padding: 7px 8px 0 9px;
    border-radius: 10px;
    background: #fff;
    box-shadow: 0 0 8px rgba(0, 0, 0, 0.5);
    font-family: 'Liberation Sans', sans-serif;
}
.toolbox label {
    display: block;
    font-size: 11.300px;
    font-weight: bold;
    line-height: 13px;
    color: #808080;
}
.swatch {
    width: 76px;
    height: 27px;
    margin: 4px 0 7px 2px;
    border: 1px solid #767676;
    background: #fe0000;
}
.tools {
    display: grid;
    grid-template-columns: 28px 28px;
    grid-auto-rows: 28px;
    gap: 5px 10px;
    padding-left: 7px;
    margin: 3px 0 7px;
}
.tools button {
    border: 0;
    padding: 4px;
    border-radius: 4px;
    background: none;
}
.tools .selected {
    background: #ccc;
}
.tools .disabled {
    opacity: 0.3;
}
.size-slider {
    width: 80px;
    height: 8px;
    margin: 10px 0 0 1px;
    border: 1px solid #b2b2b2;
    border-radius: 4px;
    background: linear-gradient(to right, #0075ff 14px, #efefef 14px);
    display: flex;
    align-items: center;
}
.size-slider i {
    width: 15px;
    height: 15px;
    margin-left: 6px;
    border-radius: 50%;
    background: #0075ff;
}
```
